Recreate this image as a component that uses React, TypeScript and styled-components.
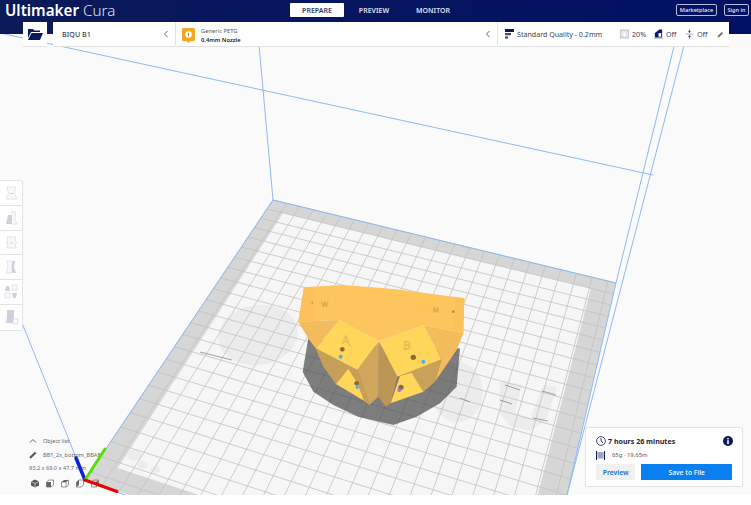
import React from "react";
import styled, { createGlobalStyle } from "styled-components";

const Global = createGlobalStyle`
  html, body { margin: 0; padding: 0; background: #fff; }
  body { font-family: "Noto Sans", "Open Sans", sans-serif; overflow: hidden; }
`;

const NAVY = "#0a1a5c";
const BLUE_LINE = "#8db9f0";

const Page = styled.div`
  position: relative;
  width: 751px;
  height: 505px;
  overflow: hidden;
  background: #fff;
`;
const Viewport = styled.svg`
  position: absolute;
  left: 0;
  top: 0;
  width: 751px;
  height: 495px;
  background: #fafafa;
`;
const Chrome = styled.div`
  position: relative;
  display: flex;
  flex-direction: column;
`;
const Header = styled.header`
  height: 34px;
  display: flex;
  align-items: flex-start;
  background: linear-gradient(90deg, #0b1a58 0%, #06155e 50%, #001064 100%);
  color: #fff;
`;
const Logo = styled.div`
  width: 290px;
  padding: 0 0 0 5px;
  box-sizing: border-box;
  font-size: 15.2px;
  line-height: 21px;
  font-weight: 300;
  color: #dfe3f2;
  b { font-weight: 600; color: #fff; }
`;
const Stages = styled.nav`
  display: flex;
  margin-top: 3px;
  width: 386px;
`;
const Stage = styled.div<{ $active?: boolean; $w: number }>`
  width: ${(p) => p.$w}px;
  height: 14px;
  border-radius: 1px;
  display: flex;
  align-items: center;
  justify-content: center;
  font-size: 7px;
  font-weight: 600;
  background: ${(p) => (p.$active ? "#fff" : "transparent")};
  color: ${(p) => (p.$active ? "#333b66" : "#dfe3f2")};
`;
const AccountBar = styled.div`
  display: flex;
  gap: 7px;
  margin-top: 4px;
`;
const OutlineBtn = styled.div<{ $w: number }>`
  width: ${(p) => p.$w}px;
  height: 12px;
  box-sizing: border-box;
  border: 1px solid #b5bcd8;
  border-radius: 2px;
  display: flex;
  align-items: center;
  justify-content: center;
  font-size: 5.6px;
  font-weight: 500;
  color: #eef0f8;
`;
const Toolbar = styled.div`
  display: flex;
  margin: -12px 0 0 23px;
  height: 25px;
  width: 706px;
`;
const Block = styled.div<{ $w: number; $mr?: number }>`
  width: ${(p) => p.$w}px;
  margin-right: ${(p) => p.$mr ?? 0}px;
  box-sizing: border-box;
  height: 25px;
  background: #fff;
  border-bottom: 1px solid #e2e2e2;
  display: flex;
  align-items: center;
  flex: none;
`;
const FolderBlock = styled(Block)`
  justify-content: center;
`;
const PrinterName = styled.div`
  flex: 1;
  padding-left: 9px;
  font-size: 7.2px;
  font-weight: 500;
  color: #3a3f55;
`;
const ChevronBox = styled.svg`
  flex: none;
  width: 6px;
  height: 8px;
  margin-right: 6px;
`;
const Divider = styled.div`
  width: 1px;
  height: 24px;
  background: #e4e4e4;
  flex: none;
`;
const MaterialText = styled.div`
  flex: 1;
  padding: 3px 0 0 6px;
  display: flex;
  flex-direction: column;
  font-size: 5.8px;
  line-height: 8.5px;
  color: #555;
  b { font-weight: 600; color: #1c2030; }
`;
const BadgeIcon = styled.svg`
  flex: none;
  width: 13px;
  height: 15px;
  margin: 2px 0 0 6px;
`;
const QualityIcon = styled.svg`
  flex: none;
  width: 9px;
  height: 10px;
  margin-left: 7px;
`;
const QualityText = styled.div`
  margin-left: 3px;
  width: 103px;
  font-size: 7.1px;
  color: #3a3f55;
  white-space: nowrap;
`;
const Setting = styled.div<{ $w: number }>`
  display: flex;
  align-items: center;
  gap: 3px;
  width: ${(p) => p.$w}px;
  font-size: 7.2px;
  color: #3a3f55;
`;
const SettingIcon = styled.svg`
  flex: none;
  width: 9px;
  height: 10px;
`;
const SideTools = styled.div`
  position: absolute;
  left: 0;
  top: 180px;
  width: 23px;
  display: flex;
  flex-direction: column;
  background: #fff;
  border: 1px solid #e3e3e3;
  border-left: none;
  border-radius: 0 2px 2px 0;
  box-sizing: border-box;
`;
const ToolCell = styled.div<{ $last?: boolean }>`
  height: 24.8px;
  display: flex;
  align-items: center;
  justify-content: center;
  border-bottom: ${(p) => (p.$last ? "none" : "1px solid #e3e3e3")};
  box-sizing: border-box;
`;
const ToolIcon = styled.svg`
  width: 15px;
  height: 16px;
`;
const ObjectPanel = styled.div`
  position: absolute;
  left: 29px;
  top: 435px;
  display: flex;
  flex-direction: column;
  color: #666;
  font-size: 5.6px;
`;
const PanelRow = styled.div<{ $h: number }>`
  display: flex;
  align-items: center;
  height: ${(p) => p.$h}px;
  white-space: nowrap;
`;
const RowIcon = styled.svg`
  flex: none;
  width: 8px;
  height: 8px;
  margin-right: 6px;
`;
const ViewIcons = styled.div`
  display: flex;
  gap: 7px;
  margin: 8px 0 0 2px;
`;
const ViewIcon = styled.svg`
  width: 8px;
  height: 9px;
`;
const AxisSvg = styled.svg`
  position: absolute;
  left: 60px;
  top: 440px;
  width: 70px;
  height: 55px;
`;
const PrintCard = styled.div`
  position: absolute;
  left: 585px;
  top: 427px;
  width: 158px;
  height: 60px;
  box-sizing: border-box;
  padding: 7px 10px 0 10px;
  background: #fff;
  border: 1px solid #e2e2e2;
  border-radius: 2px;
`;
const TimeRow = styled.div`
  display: flex;
  align-items: center;
  height: 12px;
  font-size: 7.1px;
  font-weight: 700;
  color: #1b1f33;
`;
const Clock = styled.svg`
  flex: none;
  width: 10px;
  height: 10px;
  margin-right: 2px;
`;
const InfoIcon = styled.svg`
  flex: none;
  width: 10px;
  height: 10px;
  margin-left: auto;
  margin-right: -1px;
`;
const StatRow = styled.div`
  display: flex;
  align-items: center;
  height: 12px;
  margin-top: 2px;
  font-size: 5.9px;
  color: #555;
`;
const Spool = styled.svg`
  flex: none;
  width: 9px;
  height: 9px;
  margin-right: 7px;
`;
const ButtonRow = styled.div`
  display: flex;
  gap: 6px;
  margin-top: 3px;
`;
const SecondaryBtn = styled.div`
  width: 40px;
  height: 16px;
  background: #f0f0f0;
  color: #1a6fcf;
  font-size: 6.8px;
  font-weight: 600;
  display: flex;
  align-items: center;
  justify-content: center;
`;
const PrimaryBtn = styled.div`
  width: 92px;
  height: 16px;
  background: #0a7ff0;
  color: #fff;
  font-size: 6.8px;
  font-weight: 500;
  display: flex;
  align-items: center;
  justify-content: center;
`;

type P = [number, number];

/* Maps the unit square onto the bed's quadrilateral (perspective). */
function makeHomography(a: P, b: P, c: P, d: P) {
  const dx1 = b[0] - c[0], dx2 = d[0] - c[0], sx = a[0] - b[0] + c[0] - d[0];
  const dy1 = b[1] - c[1], dy2 = d[1] - c[1], sy = a[1] - b[1] + c[1] - d[1];
  const den = dx1 * dy2 - dx2 * dy1;
  const g = (sx * dy2 - dx2 * sy) / den;
  const h = (dx1 * sy - sx * dy1) / den;
  const A = b[0] - a[0] + g * b[0], B = d[0] - a[0] + h * d[0], C = a[0];
  const D = b[1] - a[1] + g * b[1], E = d[1] - a[1] + h * d[1], F = a[1];
  return (u: number, v: number): P => {
    const w = g * u + h * v + 1;
    return [(A * u + B * v + C) / w, (D * u + E * v + F) / w];
  };
}

const CELLS = 23.5;
const map = makeHomography([273, 200], [616, 283], [535, 633], [85, 480]);
const cell = (i: number, j: number) => map(i / CELLS, j / CELLS);
const poly = (pts: P[]) => pts.map((p) => p.map((n) => n.toFixed(1)).join(",")).join(" ");
const grid = Array.from({ length: 24 }, (_, i) => i);
const onBed = (pts: P[]) => poly(pts.map(([x, y]) => cell(x, y)));

const Bed = () => (
  <g>
    <polygon points={onBed([[0, 0], [CELLS, 0], [CELLS, CELLS], [0, CELLS]])} fill="#d6d6d6" />
    <polygon
      points={onBed([[1.2, 1], [CELLS - 1.4, 1], [CELLS - 1.4, CELLS - 1.2], [1.2, CELLS - 1.2]])}
      fill="#f6f6f6"
    />
    <g fill="#ececec">
      <ellipse cx="258" cy="335" rx="40" ry="30" transform="rotate(-8 258 335)" />
      <ellipse cx="457" cy="392" rx="26" ry="30" />
      <path d="M500 382 522 384 515 412 530 418 543 385 557 387 546 420 530 431 510 426 499 412z" />
      <ellipse cx="134" cy="455" rx="7" ry="6" />
      <ellipse cx="143" cy="465" rx="5" ry="4" />
      <ellipse cx="155" cy="470" rx="5" ry="4" />
    </g>
    {grid.map((i) => {
      const [x1, y1] = cell(i, 0);
      const [x2, y2] = cell(i, CELLS);
      return <line key={`u${i}`} x1={x1} y1={y1} x2={x2} y2={y2} stroke="#c2c2c2" strokeWidth="0.8" />;
    })}
    {grid.map((j) => {
      const [x1, y1] = cell(0, j);
      const [x2, y2] = cell(CELLS, j);
      return <line key={`v${j}`} x1={x1} y1={y1} x2={x2} y2={y2} stroke="#c2c2c2" strokeWidth="0.8" />;
    })}
    <g stroke="#8a8a8a" strokeWidth="0.8">
      <line x1="505" y1="385" x2="520" y2="390" />
      <line x1="542" y1="391" x2="556" y2="395" />
      <line x1="500" y1="400" x2="512" y2="404" />
      <line x1="533" y1="418" x2="548" y2="421" />
      <line x1="460" y1="398" x2="470" y2="402" />
      <line x1="200" y1="352" x2="232" y2="360" />
    </g>
  </g>
);

const VolumeLines = () => (
  <g stroke={BLUE_LINE} strokeWidth="1" fill="none">
    <line x1="0" y1="33" x2="653" y2="175" />
    <line x1="258" y1="34" x2="273" y2="200" />
    <line x1="677" y1="34" x2="616" y2="283" />
    <line x1="687" y1="34" x2="567" y2="495" />
    <line x1="0" y1="268" x2="85" y2="480" />
    <line x1="273" y1="200" x2="616" y2="283" />
    <line x1="273" y1="200" x2="85" y2="480" />
    <line x1="616" y1="283" x2="567" y2="495" />
    <line x1="85" y1="480" x2="125" y2="495" />
  </g>
);

const Faces: { fill: string; pts: string }[] = [
  { fill: "#c89f58", pts: "107,235 232,300 268,405 252,393 205,296 168,342 130,290" },
  { fill: "#bd9655", pts: "297,213 352,320 332,400 318,410 295,380" },
  { fill: "#d0a65c", pts: "297,213 232,300 268,405 295,380" },
  { fill: "#c9a25a", pts: "352,320 485,268 465,335 430,365 395,308" },
  { fill: "#ffd65a", pts: "205,296 232,340 252,392 168,342" },
  { fill: "#ffd65a", pts: "360,318 395,308 430,365 332,400" },
  { fill: "#ffd65a", pts: "178,150 297,213 232,300 107,235" },
  { fill: "#ffd65a", pts: "297,213 430,165 485,268 352,320" },
  { fill: "#f3bb5c", pts: "55,155 178,150 107,235 88,210" },
  { fill: "#f3bb5c", pts: "430,165 550,190 530,240 465,335 485,268" },
  { fill: "#fdc55c", pts: "72,52 190,45 350,58 553,85 550,190 430,165 297,213 178,150 55,155" },
  { fill: "#fbc25b", pts: "72,52 100,50 100,153 55,155" },
  { fill: "#fbc25b", pts: "525,82 553,85 550,190 522,184" },
];

const Dots: [number, number, string, number][] = [
  [187, 238, "#8a6a3a", 7],
  [182, 260, "#48b4e8", 6],
  [230, 340, "#8a6a3a", 7],
  [232, 352, "#48b4e8", 5],
  [400, 262, "#8a6a3a", 8],
  [430, 275, "#5aa8e8", 6],
  [363, 352, "#8a6a3a", 8],
  [358, 360, "#a070e0", 6],
  [97, 98, "#c09a50", 3],
  [520, 125, "#b08a48", 4],
];

const Model = () => (
  <g transform="translate(280 270) scale(0.3333)">
    <polygon
      points="85,205 68,305 100,365 160,405 235,440 340,465 410,440 480,400 530,350 540,235 400,240"
      fill="#4a4a4a"
      fillOpacity="0.7"
    />
    {Faces.map((f) => (
      <polygon key={f.pts} points={f.pts} fill={f.fill} />
    ))}
    {Dots.map(([x, y, fill, r]) => (
      <circle key={`${x}${y}`} cx={x} cy={y} r={r} fill={fill} />
    ))}
    <g fill="none" stroke="#b08c48" strokeWidth="1" opacity="0.75" fontFamily="Liberation Sans, sans-serif">
      <text x="185" y="222" fontSize="38" transform="skewY(18) translate(0 -62)">A</text>
      <text x="370" y="240" fontSize="34" transform="skewY(-14) translate(0 92)">B</text>
      <text x="124" y="110" fontSize="22" transform="skewY(-6) translate(0 14)">W</text>
      <text x="458" y="126" fontSize="22" transform="skewY(6) translate(0 -48)">M</text>
    </g>
  </g>
);

const Chevron = () => (
  <ChevronBox viewBox="0 0 6 8">
    <path d="M4.5 1 1.5 4l3 3" fill="none" stroke="#555" strokeWidth="0.9" />
  </ChevronBox>
);

const toolPaths = [
  { body: "M3 2h9l-1.500 6L13 14H2l2.500-6z", solid: "M6 8h3v1H6z" },
  { body: "M7 2h5l-1.500 6L13 14H7", solid: "M2 14h6V5H4z" },
  { body: "M3 3h9l-1 4 2 2-2 1 1 4H3l1-4-2-1 2-2z", solid: "M6 8.500h3v1H6z" },
  { body: "M3 2h5v12H2l2-6z", solid: "M8 2h3l-1 6 2 6H8z" },
  { body: "M1 9h5v5H1zM8 1h5v5H8z", solid: "M2 2h3l1 5H1zM8 9h5l-1 5H9z" },
  { body: "M9 10h5v5H9z", solid: "M3 1h7v9H9v4H2l1-6z" },
];

export default function App() {
  return (
    <Page>
      <Global />
      <Viewport viewBox="0 0 751 495">
        <Bed />
        <VolumeLines />
        <Model />
      </Viewport>
      <Chrome>
        <Header>
          <Logo>
            <b>Ultimaker</b> Cura
          </Logo>
          <Stages>
            <Stage $active $w={54}>PREPARE</Stage>
            <Stage $w={60}>PREVIEW</Stage>
            <Stage $w={58}>MONITOR</Stage>
          </Stages>
          <AccountBar>
            <OutlineBtn $w={41}>Marketplace</OutlineBtn>
            <OutlineBtn $w={25}>Sign in</OutlineBtn>
          </AccountBar>
        </Header>
        <Toolbar>
          <FolderBlock $w={24} $mr={6}>
            <svg width="15" height="11" viewBox="0 0 15 11">
              <path d="M0 0h5l1.500 1.500H12V3H3L0 9z" fill={NAVY} />
              <path d="M3.500 4H15l-3 7H0z" fill={NAVY} />
            </svg>
          </FolderBlock>
          <Block $w={122}>
            <PrinterName>BIQU B1</PrinterName>
            <Chevron />
          </Block>
          <Divider />
          <Block $w={321}>
            <BadgeIcon viewBox="0 0 13 15">
              <path d="M1.500 0h10A1.500 1.500 0 0 1 13 1.500v10A1.500 1.500 0 0 1 11.500 13H8.500L6.500 15l-2-2h-3A1.500 1.500 0 0 1 0 11.500v-10A1.500 1.500 0 0 1 1.500 0z" fill="#f5a623" />
              <circle cx="6.500" cy="6.500" r="3.200" fill="#fff" />
              <rect x="6" y="4.800" width="1" height="3.400" fill="#b07a10" />
            </BadgeIcon>
            <MaterialText>
              <span>Generic PETG</span>
              <b>0.4mm Nozzle</b>
            </MaterialText>
            <Chevron />
          </Block>
          <Divider />
          <Block $w={231}>
            <QualityIcon viewBox="0 0 9 10">
              <rect x="0" y="0" width="9" height="3" fill={NAVY} />
              <rect x="0" y="4" width="6" height="2.200" fill="#3b4a80" />
              <rect x="0" y="7.400" width="3" height="2.200" fill="#3b4a80" />
            </QualityIcon>
            <QualityText>Standard Quality - 0.2mm</QualityText>
            <Setting $w={34}>
              <SettingIcon viewBox="0 0 10 10">
                <rect x="0" y="0" width="10" height="10" fill="#c9cbd8" />
                <circle cx="5" cy="5" r="3.600" fill="#fff" />
                <circle cx="5" cy="5" r="2.400" fill="none" stroke="#aab" strokeDasharray="1 1" />
              </SettingIcon>
              20%
            </Setting>
            <Setting $w={31}>
              <SettingIcon viewBox="0 0 10 10">
                <path d="M1 4 6 0h3v9H1z" fill={NAVY} />
                <path d="M5 4h3v4H5z" fill="#fff" />
                <rect x="0" y="9" width="10" height="1" fill="#8d93ad" />
              </SettingIcon>
              Off
            </Setting>
            <Setting $w={32}>
              <SettingIcon viewBox="0 0 10 10">
                <path d="M1 5h8" stroke="#8d93ad" strokeWidth="0.800" />
                <path d="M5 0v3M3.500 2 5 3.500 6.500 2M5 10V7M3.500 8 5 6.500 6.500 8" stroke={NAVY} strokeWidth="0.800" fill="none" />
              </SettingIcon>
              Off
            </Setting>
            <svg width="7" height="7" viewBox="0 0 7 7">
              <path d="M0.500 6.500 1 4.800 4.800 1 6 2.200 2.200 6z" fill="#666" />
            </svg>
          </Block>
        </Toolbar>
      </Chrome>
      <SideTools>
        {toolPaths.map((t, i) => (
          <ToolCell key={t.body} $last={i === toolPaths.length - 1}>
            <ToolIcon viewBox="0 0 15 16">
              <path d={t.body} fill="#f9f9fb" stroke="#dcdce6" strokeWidth="0.800" />
              {t.solid && <path d={t.solid} fill="#cfd0dc" />}
            </ToolIcon>
          </ToolCell>
        ))}
      </SideTools>
      <ObjectPanel>
        <PanelRow $h={11}>
          <RowIcon viewBox="0 0 8 8">
            <path d="M1 5.500 4 2.500l3 3" fill="none" stroke="#666" strokeWidth="1" />
          </RowIcon>
          Object list
        </PanelRow>
        <PanelRow $h={18}>
          <RowIcon viewBox="0 0 8 8">
            <path d="M0.500 7.500 1 5.500 5.800 0.700 7.300 2.200 2.500 7z" fill="#555" />
          </RowIcon>
          BB1_2x_bottom_BBAB
        </PanelRow>
        <PanelRow $h={7}>93.2 x 69.0 x 47.7 mm</PanelRow>
        <ViewIcons>
          <ViewIcon viewBox="0 0 8 9">
            <path d="M4 0.500 8 2.500v4L4 8.500 0 6.500v-4z" fill="#555" />
            <path d="M0 2.500 4 4.500 8 2.500M4 4.500v4" stroke="#fff" strokeWidth="0.600" fill="none" />
          </ViewIcon>
          <ViewIcon viewBox="0 0 8 9">
            <path d="M0.500 3 3 1h4.500v5L5 8H0.500z" fill="#fff" stroke="#666" strokeWidth="0.700" />
            <path d="M0.500 3H5v5H0.500z" fill="#666" />
          </ViewIcon>
          <ViewIcon viewBox="0 0 8 9">
            <path d="M0.500 3 3 1h4.500L5 3z" fill="#666" />
            <path d="M0.500 3H5v5H0.500zM5 3l2.500-2v5L5 8" fill="#fff" stroke="#666" strokeWidth="0.700" />
          </ViewIcon>
          <ViewIcon viewBox="0 0 8 9">
            <path d="M0.500 3 3 1h4.500v5L5 8H0.500z" fill="none" stroke="#666" strokeWidth="0.700" />
            <path d="M0.500 3 3 1v5L0.500 8z" fill="#666" />
          </ViewIcon>
          <ViewIcon viewBox="0 0 8 9">
            <path d="M0.500 3 3 1h4.500v5L5 8H0.500z" fill="none" stroke="#666" strokeWidth="0.700" />
            <path d="M5 3l2.500-2v5L5 8z" fill="#666" />
          </ViewIcon>
        </ViewIcons>
      </ObjectPanel>
      <AxisSvg viewBox="60 440 70 55">
        <line x1="85" y1="480" x2="76" y2="458" stroke="#0a22d8" strokeWidth="3.500" strokeLinecap="round" />
        <line x1="85" y1="480" x2="105" y2="449" stroke="#55e000" strokeWidth="3" strokeLinecap="round" />
        <line x1="85" y1="480" x2="117" y2="491.500" stroke="#ee0000" strokeWidth="3" strokeLinecap="round" />
      </AxisSvg>
      <PrintCard>
        <TimeRow>
          <Clock viewBox="0 0 10 10">
            <circle cx="5" cy="5" r="4.400" fill="none" stroke={NAVY} strokeWidth="0.800" />
            <path d="M5 2v3l2 2" fill="none" stroke={NAVY} strokeWidth="0.800" />
          </Clock>
          7 hours 26 minutes
          <InfoIcon viewBox="0 0 10 10">
            <circle cx="5" cy="5" r="5" fill={NAVY} />
            <rect x="4.200" y="2" width="1.600" height="1.400" fill="#fff" />
            <rect x="4.200" y="4.200" width="1.600" height="3.800" fill="#fff" />
          </InfoIcon>
        </TimeRow>
        <StatRow>
          <Spool viewBox="0 0 9 9">
            <rect x="0" y="0" width="1" height="9" fill={NAVY} />
            <rect x="8" y="0" width="1" height="9" fill={NAVY} />
            <rect x="1.500" y="1" width="6" height="6.500" fill="#9da3bd" />
          </Spool>
          65g · 19.65m
        </StatRow>
        <ButtonRow>
          <SecondaryBtn>Preview</SecondaryBtn>
          <PrimaryBtn>Save to File</PrimaryBtn>
        </ButtonRow>
      </PrintCard>
    </Page>
  );
}
